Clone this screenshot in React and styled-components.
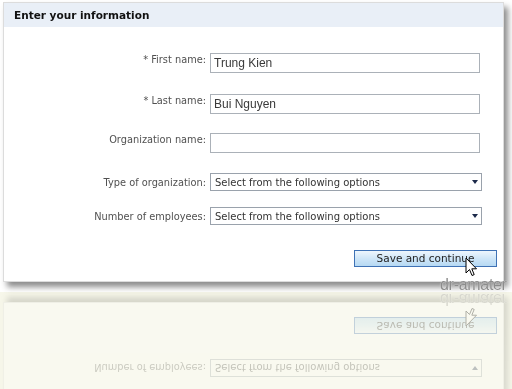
import styled, { createGlobalStyle } from "styled-components";

const GlobalStyle = createGlobalStyle`
  html, body {
    margin: 0;
    padding: 0;
  }
  body {
    width: 512px;
    height: 389px;
    overflow: hidden;
    background: linear-gradient(#ffffff 292px, #f7f7ea 292px);
    font-family: "DejaVu Sans", Verdana, sans-serif;
  }
`;

const Stage = styled.div`
  position: relative;
  width: 512px;
  height: 292px;
  box-sizing: border-box;
  padding: 2px 0 0 3px;
  -webkit-box-reflect: below 0px
    linear-gradient(to bottom, rgba(0, 0, 0, 0.16), rgba(0, 0, 0, 0.3));
`;

const Panel = styled.div`
  width: 501px;
  height: 280px;
  box-sizing: border-box;
  border: 1px solid #dcdcdc;
  background: #fff;
  box-shadow: 4px 5px 6px rgba(0, 0, 0, 0.45);
  display: flex;
  flex-direction: column;
`;

const Header = styled.div`
  height: 24px;
  background: #e9eff7;
  display: flex;
  align-items: center;
  padding-left: 10px;
`;

const Title = styled.h2`
  margin: 0;
  font-size: 10.5px;
  font-weight: bold;
  color: #111;
`;

const Body = styled.div`
  flex: 1;
  display: flex;
  flex-direction: column;
  padding-top: 26px;
`;

const Row = styled.div`
  display: grid;
  grid-template-columns: 202px auto;
  column-gap: 4px;
  align-items: ${(p) => (p.$center ? "center" : "start")};
  margin-top: ${(p) => p.$top || 0}px;
`;

const Label = styled.label`
  text-align: right;
  font-size: 9.8px;
  color: #505050;
  padding-top: ${(p) => (p.$center ? 0 : 1)}px;
  white-space: nowrap;
`;

const Input = styled.div`
  width: 270px;
  height: 20px;
  box-sizing: border-box;
  border: 1px solid #abb1b8;
  padding: 0 3px;
  font-family: "Liberation Sans", Arial, sans-serif;
  font-size: 12px;
  line-height: 18px;
  color: #3a3a3a;
`;

const Select = styled.div`
  width: 272px;
  height: 18px;
  box-sizing: border-box;
  border: 1px solid #9aa2ac;
  padding: 0 3px 0 4px;
  display: flex;
  align-items: center;
  justify-content: space-between;
  font-size: 10px;
  color: #333;
`;

const Arrow = styled.span`
  width: 0;
  height: 0;
  border-left: 3.5px solid transparent;
  border-right: 3.5px solid transparent;
  border-top: 4px solid #1c2a4a;
`;

const Actions = styled.div`
  display: flex;
  justify-content: flex-end;
  padding-right: 6px;
  margin-top: 25px;
`;

const Button = styled.button`
  width: 143px;
  height: 17px;
  box-sizing: border-box;
  border: 1px solid #3f72b5;
  background: linear-gradient(#eef6fd, #cfe6f8 50%, #b6d9f3);
  font-family: "DejaVu Sans", Verdana, sans-serif;
  font-size: 10.5px;
  color: #222;
  padding: 0;
  line-height: 15px;
`;

const Cursor = styled.svg`
  position: absolute;
  left: 465px;
  top: 257px;
`;

const Watermark = styled.span`
  position: absolute;
  left: 440px;
  top: 276px;
  font-family: "Liberation Sans", Arial, sans-serif;
  font-size: 16px;
  color: #8c8c8c;
  text-shadow: 0 0 1px #fff;
  letter-spacing: -0.3px;
`;

const fields = [
  { label: "* First name:", value: "Trung Kien", top: 0 },
  { label: "* Last name:", value: "Bui Nguyen", top: 21 },
  { label: "Organization name:", value: "", top: 19 },
];

const selects = [
  { label: "Type of organization:", top: 20 },
  { label: "Number of employees:", top: 16 },
];

export default function App() {
  return (
    <>
      <GlobalStyle />
      <Stage>
        <Panel>
          <Header>
            <Title>Enter your information</Title>
          </Header>
          <Body>
            {fields.map((f) => (
              <Row key={f.label} $top={f.top}>
                <Label>{f.label}</Label>
                <Input>{f.value}</Input>
              </Row>
            ))}
            {selects.map((s) => (
              <Row key={s.label} $top={s.top} $center>
                <Label $center>{s.label}</Label>
                <Select>
                  <span>Select from the following options</span>
                  <Arrow />
                </Select>
              </Row>
            ))}
            <Actions>
              <Button>Save and continue</Button>
            </Actions>
          </Body>
        </Panel>
        <Watermark>dr-amater</Watermark>
        <Cursor width="13" height="21" viewBox="0 0 13 21">
          <path
            d="M1 1 L1 16 L4.5 12.5 L7 18.5 L9.2 17.6 L6.8 11.8 L11.5 11.8 Z"
            fill="#fff"
            stroke="#000"
            strokeWidth="1"
            strokeLinejoin="miter"
          />
        </Cursor>
      </Stage>
    </>
  );
}
